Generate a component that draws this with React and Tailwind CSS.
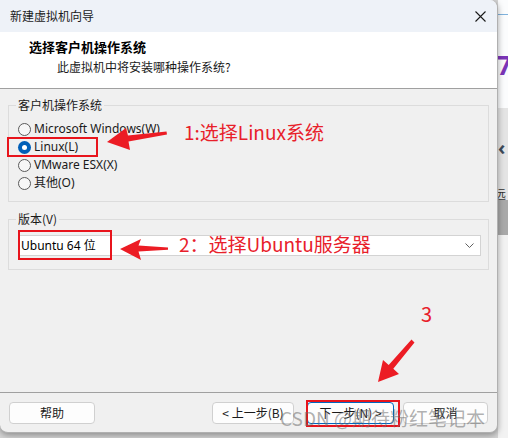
import React from "react";

const UI = "font-['Noto_Sans','Noto_Sans_CJK_SC',sans-serif]";
const CJK = "font-['Noto_Sans_CJK_SC','Noto_Sans',sans-serif]";

function Radio({ checked, label }) {
  return (
    <div className="flex items-center h-[18px]">
      {checked ? (
        <span className="w-[13px] h-[13px] rounded-full bg-[#005fb8] flex items-center justify-center">
          <span className="w-[5px] h-[5px] rounded-full bg-white" />
        </span>
      ) : (
        <span className="w-[13px] h-[13px] rounded-full border border-[#5a5a5a] bg-[#f7f7f7]" />
      )}
      <span className="ml-[3px] text-[12px] text-[#1a1a1a] leading-none">{label}</span>
    </div>
  );
}

function Btn({ w, children, focus }) {
  return (
    <div
      className={`h-[22px] ${w} rounded-[4px] bg-[#fdfdfd] border flex items-center justify-center text-[12px] text-[#1a1a1a] ${
        focus ? "border-[#0067c0]" : "border-[#d0d0d0]"
      }`}
    >
      {children}
    </div>
  );
}

export default function App() {
  return (
    <div className={`relative w-[508px] h-[438px] overflow-hidden flex bg-[#d4d4d4] ${UI}`}>
      {/* dialog */}
      <div className="relative z-10 w-[498px] h-[433px] flex flex-col bg-[#f0f0f0] rounded-tr-[8px] rounded-b-[8px] border-r border-b border-[#b0b0b0] shadow-[0_2px_6px_rgba(0,0,0,0.35)] overflow-hidden">
        {/* title bar */}
        <div className="h-[32px] shrink-0 bg-[#eef2f8] flex items-center justify-between pl-[10px] pr-[10px]">
          <span className={`text-[12px] text-[#1a1a1a] ${CJK}`}>新建虚拟机向导</span>
          <svg width="11" height="11" viewBox="0 0 11 11" className="mr-[1px]">
            <path d="M0.5 0.5 L10.5 10.5 M10.5 0.5 L0.5 10.5" stroke="#1a1a1a" strokeWidth="1.1" />
          </svg>
        </div>
        {/* header */}
        <div className="h-[57px] shrink-0 bg-white border-b border-[#a0a0a0] pl-[29px] pt-[6px]">
          <div className={`text-[13px] font-bold text-[#000] leading-[18px] ${CJK}`}>选择客户机操作系统</div>
          <div className={`ml-[28px] mt-[3px] text-[12px] text-[#1a1a1a] leading-[16px] ${CJK}`}>
            此虚拟机中将安装哪种操作系统?
          </div>
        </div>
        {/* body */}
        <div className="flex-1 flex flex-col px-[8px] pt-[8px]">
          <fieldset className="w-[481px] border border-[#dcdcdc] pl-[9px] pb-[9px] m-0">
            <legend className={`ml-[-2px] px-[2px] text-[12px] leading-[16px] text-[#1a1a1a] ${CJK}`}>客户机操作系统</legend>
            <div className="pt-[7px] flex flex-col">
              <Radio label="Microsoft Windows(W)" />
              <Radio checked label="Linux(L)" />
              <Radio label="VMware ESX(X)" />
              <Radio label="其他(O)" />
            </div>
          </fieldset>
          <fieldset className="mt-[9px] w-[481px] border border-[#dcdcdc] pl-[9px] pr-[7px] pb-[13px] m-0">
            <legend className={`ml-[-2px] px-[2px] text-[12px] leading-[16px] text-[#1a1a1a] ${CJK}`}>版本(V)</legend>
            <div className="mt-[8px] h-[21px] bg-white border border-[#d3d3d3] flex items-center justify-between pl-[2px] pr-[6px]">
              <span className="text-[12px] text-[#000]">Ubuntu 64 位</span>
              <svg width="9" height="5" viewBox="0 0 9 5">
                <path d="M0.5 0.5 L4.5 4.5 L8.5 0.5" fill="none" stroke="#606060" strokeWidth="1" />
              </svg>
            </div>
          </fieldset>
        </div>
        {/* footer */}
        <div className="h-[40px] shrink-0 border-t border-[#a0a0a0] flex items-start pt-[9px] px-[9px]">
          <Btn w="w-[86px]">
            <span className={CJK}>帮助</span>
          </Btn>
          <div className="flex-1" />
          <Btn w="w-[82px]">
            <span className={CJK}>&lt; 上一步(B)</span>
          </Btn>
          <div className="w-[13px]" />
          <Btn w="w-[87px]" focus>
            <span className={CJK}>下一步(N) &gt;</span>
          </Btn>
          <div className="w-[9px]" />
          <Btn w="w-[85px]">
            <span className={CJK}>取消</span>
          </Btn>
        </div>
      </div>

      {/* right desktop strip */}
      <div className="w-[10px] flex flex-col">
        <div className="relative h-[108px] bg-[#fbfcfd] overflow-hidden">
          <div className="mt-[14px] h-[1px] bg-[#7fb2dd]" />
          <span className="absolute left-[-1px] top-[52px] text-[26px] font-bold text-[#7b35b8] leading-none">7</span>
        </div>
        <div className="relative h-[92px] bg-[#e4e4e4] overflow-hidden">
          <span className="absolute left-[0px] top-[30px] text-[20px] font-bold text-[#3d4a5a] leading-none">‹</span>
          <span className={`absolute left-[-4px] top-[80px] text-[12px] text-[#333] leading-none ${CJK}`}>远</span>
        </div>
        <div className="h-[35px] bg-[#a9a9a9]" />
        <div className="flex-1 bg-[#f2f2f2]" />
      </div>

      {/* annotations */}
      <div className="absolute left-[7px] top-[137px] w-[91px] h-[20px] border-2 border-[#e8141c] z-20" />
      <div className="absolute left-[18px] top-[230px] w-[94px] h-[30px] border-2 border-[#e8141c] z-20" />
      <div className="absolute left-[306px] top-[400px] w-[94px] h-[27px] border-2 border-[#e8141c] z-20" />

      <div className={`absolute left-[184px] top-[119px] z-20 text-[19px] leading-[26px] text-[#e8202a] ${CJK}`}>1:选择Linux系统</div>
      <div className={`absolute left-[179px] top-[231px] z-20 text-[19px] leading-[26px] text-[#e8202a] ${CJK}`}>2：选择Ubuntu服务器</div>
      <div className={`absolute left-[421px] top-[301px] z-20 text-[20px] leading-[26px] text-[#e8202a] ${CJK}`}>3</div>

      <svg className="absolute left-0 top-0 z-20 pointer-events-none" width="508" height="438" viewBox="0 0 508 438">
        <polygon
          fill="#ec1c24"
          points="107,142 130,150 128.5,141.5 167,134.5 166.5,131.5 128,135.5 126,128"
        />
        <polygon
          fill="#ec1c24"
          points="120,249 141,260 138.5,251.5 168,249.8 168,247.5 138.5,245.5 141,239"
        />
        <polygon
          fill="#ec1c24"
          points="378,382 399,374 393.3,368.7 414.5,342.5 411.5,339.5 388.7,364.9 383,360"
        />
      </svg>

      <div className={`absolute left-[280px] top-[405px] z-30 text-[19px] leading-[26px] text-[rgba(110,110,110,0.55)] whitespace-nowrap ${CJK}`}>
        CSDN @期待粉红笔记本
      </div>
    </div>
  );
}
